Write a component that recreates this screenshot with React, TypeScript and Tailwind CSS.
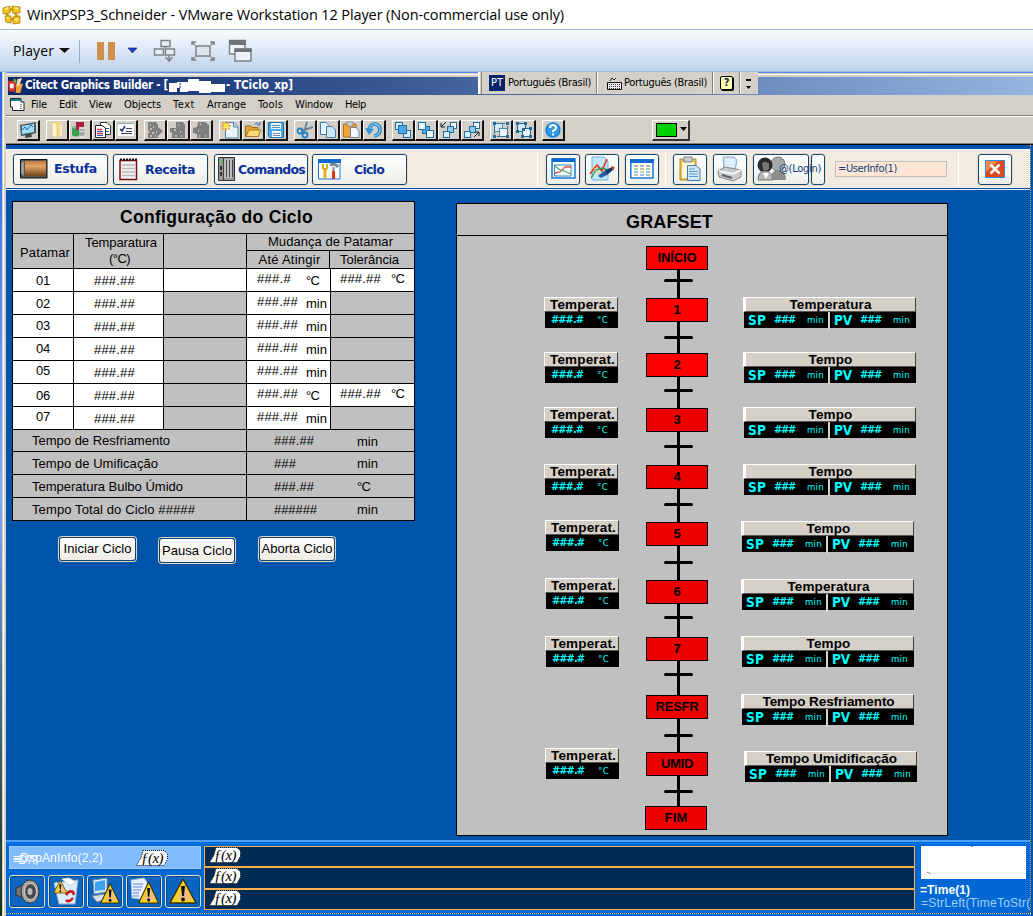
import React, { useLayoutEffect, useRef } from "react";

/** Single line of text whose tracking is adjusted to span a given width. */
function Fit({ w, className = "", children }: { w: number; className?: string; children: string }) {
  const ref = useRef<HTMLSpanElement>(null);
  useLayoutEffect(() => {
    const el = ref.current;
    if (!el) return;
    el.style.letterSpacing = "0px";
    const natural = el.getBoundingClientRect().width;
    el.style.letterSpacing = `${(w - natural) / children.length}px`;
  }, [w, children]);
  return (
    <span ref={ref} className={`inline-block shrink-0 whitespace-pre ${className}`}>
      {children}
    </span>
  );
}

const tahoma = "font-['DejaVu_Sans_Condensed','DejaVu_Sans',sans-serif]";

/* ---------- small toolbar icons (18 x 18) ---------- */
type IconName =
  | "monitor" | "folder" | "genie" | "pages" | "check" | "gray1" | "gray2" | "gray3"
  | "new" | "open" | "save" | "cut" | "copy" | "paste" | "undo"
  | "front" | "back" | "fwd" | "bwd" | "group" | "ungroup" | "help";

const sq = (x: number, y: number, f: string, s = 7, k = "#1c6ea8") => (
  <rect key={`${x}-${y}`} x={x + 0.5} y={y + 0.5} width={s} height={s} fill={f} stroke={k} />
);

const grayShapes = [
  "M2 1H10L12 4V6L17 10L12 15V17H2V12L4 11L2 9Z",
  "M7 1H14L16 4V17H3V12L1 11V7H7Z",
  "M6 1H13L17 4V17H5V13L1 12V7L5 6Z",
];

const icons: Record<IconName, React.ReactNode> = {
  monitor: (
    <>
      <path d="M1 4L17 1V12L11 14L2 15Z" fill="#53606b" />
      <path d="M3 5L15 3V11L3 13Z" fill="#9fdcf8" />
      <path d="M3 9L6 6L8 9L12 4L14 6" stroke="#1172b8" fill="none" />
      <path d="M7 13L12 12L13 16L6 17Z" fill="#404850" />
    </>
  ),
  folder: (
    <>
      <path d="M4 1H14V15H4Z" fill="#efd98a" />
      <path d="M4 1L9 3V17L4 15Z" fill="#fff6cf" stroke="#d8b95a" strokeWidth=".6" />
      <path d="M13 4V15" stroke="#fff" />
    </>
  ),
  genie: (
    <>
      <path d="M1 6H9V14Q5 17 1 14Z" fill="#37a352" />
      <ellipse cx="5" cy="6" rx="4" ry="1.6" fill="#7ad08f" />
      <path d="M5 1H13V9H5Z" fill="#b31942" />
      <path d="M8 6H15V15L12 17H9Z" fill="#dcdcdc" />
      <path d="M9 9H14M9 12H14M9 14H13" stroke="#777" />
    </>
  ),
  pages: (
    <>
      <path d="M6.500 1.500H13L16.500 5V13.500H6.500Z" fill="#fff" stroke="#333" />
      <path d="M1.500 4.500H8L11.500 7V16.500H1.500Z" fill="#fff" stroke="#223" />
      <path d="M3 8.500H8M3 12.500H9" stroke="#e02b2b" strokeWidth="1.400" />
      <path d="M3 10.500H9M3 14.500H9" stroke="#2a53c8" />
      <path d="M12 7.500H15M12 10.500H15" stroke="#2a53c8" />
    </>
  ),
  check: (
    <>
      <path d="M1 2H17V15H1Z" fill="#fff" />
      <path d="M1 2.500H17" stroke="#8aa" />
      <path d="M3 8L5 10L8 5" stroke="#1a2e80" strokeWidth="1.500" fill="none" />
      <path d="M9 7.500H15M9 10.500H15M4 12.500H15" stroke="#446" />
    </>
  ),
  gray1: <><path d={grayShapes[0]} fill="#7f7f7f" /><path d="M4 4H5M7 6H8M4 8H6M6 12H8M10 11H11M4 15H6M9 15H10" stroke="#fff" /></>,
  gray2: <><path d={grayShapes[1]} fill="#7f7f7f" /><path d="M9 4H10M5 9H7M11 11H12M6 15H8M12 15H13" stroke="#fff" /></>,
  gray3: <><path d={grayShapes[2]} fill="#7f7f7f" /><path d="M8 3H9M6 10H7M7 15H8M13 15H14" stroke="#fff" /></>,
  new: (
    <>
      <path d="M4.500 1.500H13L17 6V17H4.500Z" fill="#eaf5fd" stroke="#4d89b8" />
      <path d="M12.500 1.500V6H17" fill="#b7dbf2" stroke="#4d89b8" />
      <path d="M5 0V10M0 5H10M1.500 1.500L8.500 8.500M8.500 1.500L1.500 8.500" stroke="#f39a13" strokeWidth="1.300" />
      <circle cx="5" cy="5" r="2.500" fill="#ffe64a" />
    </>
  ),
  open: (
    <>
      <path d="M1.500 5H7L8 6.500H14V15.500H1.500Z" fill="#e3a537" stroke="#9c6c14" />
      <path d="M2 15.500L5 9H17L14 15.500Z" fill="#ffd873" stroke="#a87b22" />
      <path d="M10 4Q13 0 16 4M16 1V4H13" stroke="#5577a0" fill="none" />
    </>
  ),
  save: (
    <>
      <path d="M1.500 1.500H16.500V16.500H3L1.500 15Z" fill="#4aa9e6" stroke="#1d78b8" />
      <path d="M4 2H14V8H4Z" fill="#e4f4ff" />
      <path d="M5 10H14V16H5Z" fill="#fff" />
      <path d="M5 4.500H13M5 6.500H13M6 12.500H13M6 14.500H13" stroke="#6e8da6" />
    </>
  ),
  cut: (
    <>
      <path d="M11 1L8 11M17 6L5 10" stroke="#6d8192" strokeWidth="2" />
      <circle cx="4" cy="10" r="2.500" fill="none" stroke="#1f83cb" strokeWidth="1.800" />
      <circle cx="9" cy="14" r="2.500" fill="none" stroke="#1f83cb" strokeWidth="1.800" />
    </>
  ),
  copy: (
    <>
      <path d="M1.500 1.500H7L10 4.500V13.500H1.500Z" fill="#e9f5fd" stroke="#3f7fae" />
      <path d="M7.500 5.500H13L16.500 9V16.500H7.500Z" fill="#cfe8f8" stroke="#3f7fae" />
    </>
  ),
  paste: (
    <>
      <path d="M1.500 3H14V16H1.500Z" fill="#f0a23b" stroke="#b46e14" />
      <path d="M5 1H11V5H5Z" fill="#cfd3d6" stroke="#777" strokeWidth=".7" />
      <path d="M8.500 6.500H14L17 10V16.500H8.500Z" fill="#f2f8fd" stroke="#6f8599" />
    </>
  ),
  undo: (
    <>
      <path d="M4 9Q5 3 10 3Q15 4 15 9Q15 14 9 15" stroke="#1c78bf" strokeWidth="3.600" fill="none" />
      <path d="M4 9Q5 3 10 3Q15 4 15 9Q15 14 9 15" stroke="#6cc0f0" strokeWidth="1.800" fill="none" />
      <path d="M0 7L9 8L4 14Z" fill="#2f92d8" />
    </>
  ),
  front: <>{sq(1, 1, "#d9efff")}{sq(9, 9, "#d9efff")}{sq(4, 4, "#4aabea", 8)}</>,
  back: <>{sq(5, 5, "#4aabea", 7)}{sq(1, 1, "#eef8ff")}{sq(9, 9, "#eef8ff")}</>,
  fwd: <>{sq(10, 1, "#fff", 6)}{sq(7, 5, "#8cccf3", 6)}{sq(3, 10, "#d9efff", 6)}<path d="M6 1L1 6M1 2V6H5" stroke="#123" fill="none" /></>,
  bwd: <>{sq(10, 1, "#fff", 6)}{sq(6, 5, "#8cccf3", 6)}{sq(1, 10, "#d9efff", 6)}<path d="M11 16L16 11M12 11H16V15" stroke="#123" fill="none" /></>,
  group: (
    <>
      {sq(2, 2, "#d7e8f4", 8, "#4f87b0")}{sq(7, 7, "#e9f3fa", 8, "#4f87b0")}
      <path d="M1 1h3v3h-3zM14 1h3v3h-3zM1 14h3v3h-3zM14 14h3v3h-3z" fill="#236a9c" />
      <path d="M5 2.500H13M2.500 5V13M15.500 5V13M5 15.500H13" stroke="#236a9c" strokeDasharray="2 1" />
    </>
  ),
  ungroup: (
    <>
      {sq(2, 2, "#d7e8f4", 8, "#236a9c")}{sq(7, 7, "#e9f3fa", 8, "#236a9c")}
      <path d="M1 1h3v3h-3zM9 1h3v3h-3zM1 9h3v3h-3zM6 14h3v3h-3zM14 14h3v3h-3zM14 6h3v3h-3zM7 7h3v3h-3z" fill="#236a9c" />
    </>
  ),
  help: (
    <>
      <circle cx="9" cy="9" r="8" fill="#2f9be6" stroke="#9cc9e6" />
      <circle cx="9" cy="9" r="6.800" fill="none" stroke="#1773b8" />
      <path d="M6 7Q6 4 9 4Q12 4 12 7Q12 8.500 9 10V11M9 12.500V14.500" stroke="#fff" strokeWidth="2" fill="none" />
    </>
  ),
};

function Tool({ name }: { name: IconName }) {
  return (
    <div className="flex h-[21px] w-[23px] items-center justify-center border-t border-r-2 border-b-2 border-l border-t-white border-r-[#101010] border-b-[#101010] border-l-white bg-[#d4d0c8]">
      <svg width="18" height="18" viewBox="0 0 18 18" className="shrink-0">{icons[name]}</svg>
    </div>
  );
}

const toolGroups: IconName[][] = [
  ["monitor"],
  ["folder", "genie", "pages", "check"],
  ["gray1", "gray2", "gray3"],
  ["new", "open", "save"],
  ["cut", "copy", "paste", "undo"],
  ["front", "back", "fwd", "bwd"],
  ["group", "ungroup"],
  ["help"],
];

/* ---------- VMware frame ---------- */
function HostBars() {
  return (
    <>
      <div className="flex h-[29px] items-center bg-white pl-[2px] font-['Open_Sans','Noto_Sans',sans-serif] text-[14.500px] text-black">
        <svg width="20" height="22" viewBox="0 0 20 22" className="mr-[5px]">
          <path d="M4 9L10 5L15 12L9 16Z" fill="none" stroke="#d8a000" strokeWidth="2.500" />
          <g fill="#f8c51c" stroke="#a77d10" strokeWidth=".8">
            <path d="M1 4L8 2V9L1 10ZM10 2L18 3V9L11 9ZM3 12L9 12V19L4 18ZM11 13L18 12V19L11 20Z" />
          </g>
          <path d="M3 5L6 4M13 4L16 5M5 14L7 14M13 16L16 15" stroke="#fff3a0" strokeWidth="1.500" />
        </svg>
        <Fit w={537}>WinXPSP3_Schneider - VMware Workstation 12 Player (Non-commercial use only)</Fit>
      </div>
      <div className="flex h-[43px] items-center border-t border-b border-[#9dbfe1] bg-linear-to-b from-[#fafcfe] to-[#bfd3ec] pl-[13px] font-['Open_Sans','Noto_Sans',sans-serif] text-[14px] text-black">
        <Fit w={41}>Player</Fit>
        <svg width="200" height="28" viewBox="0 0 200 28">
          <path d="M5 11H16L10.500 16Z" fill="#111" />
          <path d="M25.500 3V26" stroke="#8ab0d8" />
          <path d="M43 5H50V23H43ZM54 5H61V23H54Z" fill="#cf8f4d" />
          <path d="M74 11H83L78.500 16Z" fill="#1b3fe0" stroke="#123" strokeWidth=".6" />
          <g fill="#e6eef7" stroke="#7d8287" strokeWidth="1.500">
            <rect x="107" y="3.500" width="9" height="6" />
            <rect x="100.500" y="12" width="9" height="6" />
            <rect x="111.500" y="12" width="9" height="6" />
            <path d="M111.500 9V12M115 18V23M111.500 20L115 24L118.500 20" fill="none" />
          </g>
          <g fill="none" stroke="#7d8287" strokeWidth="1.500">
            <rect x="142" y="9" width="14" height="10" fill="#dfe5ec" />
            <path d="M142 5H138V8M156 5H160V8M142 23H138V20M156 23H160V20M138 5L141 8M160 5L157 8M138 23L141 20M160 23L157 20" />
          </g>
          <path d="M175.500 3.500H191V17H175.500Z" fill="#eef3f9" stroke="#7d8287" strokeWidth="1.500" />
          <path d="M175 3H192V8H175Z" fill="#6f7377" />
          <path d="M181 12H197V24H181Z" fill="#eef3f9" stroke="#7d8287" strokeWidth="1.500" />
          <path d="M180.500 11.500H197.500V15H180.500Z" fill="#6f7377" />
        </svg>
      </div>
    </>
  );
}

const menus: [string, number, number][] = [
  ["File", 16, 12], ["Edit", 18, 12], ["View", 23, 12], ["Objects", 37, 12],
  ["Text", 22, 12], ["Arrange", 39, 12], ["Tools", 25, 12], ["Window", 38, 12], ["Help", 21, 0],
];

function LanguageBar() {
  return (
    <div className={`absolute top-[72px] left-[478px] flex h-[22px] w-[280px] items-center border-l-2 border-white bg-[#d4d0c8] ${tahoma} text-[11px] text-black`}>
      <div className="ml-px h-full w-[2px] border-l border-[#808080]" />
      <div className="ml-[6px] flex h-[16px] w-[16px] items-center justify-center bg-[#0a246a] text-white"><Fit w={12} className="text-[11px]">PT</Fit></div>
      <Fit w={83} className="ml-[3px]">Português (Brasil)</Fit>
      <div className="mr-[8px] ml-[5px] h-full w-[2px] border-l border-[#808080] bg-white" />
      <svg width="17" height="13" viewBox="0 0 17 13">
        <path d="M4 4L6 1L8 3L10 1M1.500 5.500H15.500V12.500H1.500Z" fill="#eee" stroke="#111" />
        <path d="M3 7.500H14M3 9.500H14M3 11.500H14" stroke="#333" strokeDasharray="1 1" />
      </svg>
      <Fit w={83} className="ml-px">Português (Brasil)</Fit>
      <div className="ml-[5px] h-full w-[2px] border-l border-[#808080] bg-white" />
      <div className="ml-[6px] flex h-[14px] w-[13px] items-center justify-center rounded-xs border border-black bg-[#ffffa8] text-[11px] font-bold text-[#0a1e6a] shadow-[1px_1px_0_#000]">?</div>
      <div className="ml-[6px] h-full w-[2px] border-l border-[#808080] bg-white" />
      <svg width="9" height="16" viewBox="0 0 9 16" className="ml-[4px]"><path d="M1 4H6V6H1ZM1 11H6L3.500 14Z" fill="#000" /></svg>
    </div>
  );
}

function BuilderBars() {
  return (
    <div className={`bg-[#d4d0c8] ${tahoma} text-[11px] text-black`}>
      <div className="h-px bg-[#5d86ee]" />
      <div className="h-px bg-[#d4d0c8]" />
      <div className="h-px bg-white" />
      <div className="h-[2px]" />
      <div className="ml-[2px] flex h-[18px] items-center bg-linear-to-r from-[#0a246a] to-[#95b5df] text-[11.500px] font-bold text-white">
        <svg width="16" height="16" viewBox="0 0 17 17" className="mr-px">
          <path d="M0 3H7L9 7L7 15L1 14Z" fill="#d83030" />
          <path d="M2 6H6V11H2Z" fill="#fff" />
          <path d="M9 6H16L13 16H8Z" fill="#f0a030" />
          <path d="M10 1L15 0L12 8L9 9Z" fill="#f7d9b0" />
          <path d="M6 0L9 2V6L6 4Z" fill="#50b050" />
        </svg>
        <Fit w={143}>{"Citect Graphics Builder - ["}</Fit>
        <svg width="58" height="17" viewBox="0 0 58 17"><path d="M1 5H9V4H20V1H31V3H43V6H57V14H43V15H31V13H20V14H12V10H9V14H1Z" fill="#fff" /><path d="M11 6H13M11 9H13" stroke="#0a246a" /></svg>
        <Fit w={67}>- TCiclo_xp]</Fit>
      </div>
      <div className="flex h-[20px] items-center pl-[4px]">
        <svg width="15" height="15" viewBox="0 0 15 15" className="mr-[6px]">
          <path d="M.5 .5H11V4H14V12.500H2.500V9H.5Z" fill="#fff" stroke="#222" />
          <path d="M1 1H11V3H1Z" fill="#1a7d8e" />
          <path d="M11 6V12M9 12.500H14" stroke="#222" strokeDasharray="1 1" />
        </svg>
        {menus.map(([label, w, gap]) => (
          <React.Fragment key={label}>
            <Fit w={w}>{label}</Fit>
            <span className="shrink-0" style={{ width: gap }} />
          </React.Fragment>
        ))}
      </div>
      <div className="h-px bg-[#808080]" />
      <div className="h-px bg-white" />
      <div className="flex h-[26px] items-center pl-[11px]">
        <div className="flex gap-[6px]">
          {toolGroups.map((g, i) => (
            <div key={i} className="flex">
              {g.map((n) => <Tool key={n} name={n} />)}
            </div>
          ))}
        </div>
        <div className="ml-[87px] flex h-[21px] w-[38px] items-center border border-r-2 border-b-2 border-white border-r-[#333] border-b-[#333] pl-[3px]">
          <div className="h-[14px] w-[21px] border border-black bg-[#00d200]" />
          <svg width="8" height="5" viewBox="0 0 8 5" className="ml-[3px]"><path d="M0 0H7L3.500 4Z" /></svg>
        </div>
      </div>
      <div className="h-px bg-[#808080]" />
      <div className="h-px bg-black" />
    </div>
  );
}

/* ---------- runtime navigation strip ---------- */
const navBox = "flex shrink-0 items-center rounded-[3px] border border-[#14466e] bg-linear-to-b from-white to-[#eeeee8] shadow-[0_0_0_1px_#e2ddd0]";

function NavStrip() {
  const label = "text-[12.500px] font-bold text-[#0b319b] font-['DejaVu_Sans',sans-serif]";
  return (
    <div className="flex h-[39px] items-center border-t border-white bg-[#f4ebe0] pl-[7px]">
      <div className={`${navBox} h-[31px] w-[95px]`}>
        <svg width="28" height="20" viewBox="0 0 28 20" className="ml-[6px] shrink-0">
          <defs><linearGradient id="roll" x1="0" y1="0" x2="0" y2="1"><stop offset="0" stopColor="#b87c45" /><stop offset=".35" stopColor="#e5a364" /><stop offset="1" stopColor="#70451c" /></linearGradient></defs>
          <path d="M.5 .5H27V19H.5Z" fill="#59544e" stroke="#111" />
          <path d="M5 2H26V17H5Z" fill="url(#roll)" />
          <path d="M1 4L4 2V17L1 14Z" fill="#9a9a94" />
        </svg>
        <Fit w={43} className={`${label} ml-[6px]`}>Estufa</Fit>
      </div>
      <div className={`${navBox} ml-[5px] h-[31px] w-[95px]`}>
        <svg width="19" height="23" viewBox="0 0 19 23" className="ml-[5px] shrink-0">
          <path d="M1 2.500H17.500V21.500H1Z" fill="#f3f3f3" stroke="#7a1010" strokeWidth="1.500" />
          <path d="M1 1.500H18" stroke="#111" strokeWidth="2" strokeDasharray="2 1" />
          <path d="M3 7H16M3 10.500H16M3 14H16M3 17.500H16" stroke="#b8b8b8" strokeWidth="1.500" />
        </svg>
        <Fit w={50} className={`${label} ml-[7px] pt-[2px]`}>Receita</Fit>
      </div>
      <div className={`${navBox} ml-[6px] h-[31px] w-[94px]`}>
        <svg width="17" height="24" viewBox="0 0 17 24" className="ml-[3px] shrink-0">
          <path d="M.5 .5H16.500V23.500H.5Z" fill="#9b9b9b" stroke="#333" />
          <path d="M5.500 1V23M8.500 3V20M11.500 3V20M14.500 3V20" stroke="#4a4a4a" strokeWidth="1.300" />
          <path d="M7 2V21M10 2V21M13 2V21" stroke="#ececec" />
          <path d="M3 3V6" stroke="#3ae03a" strokeWidth="1.500" />
          <path d="M3 9V13M3 15V19" stroke="#333" strokeWidth="2" />
        </svg>
        <Fit w={67} className={`${label} ml-[3px] pt-[2px]`}>Comandos</Fit>
      </div>
      <div className={`${navBox} ml-[4px] h-[31px] w-[95px]`}>
        <svg width="23" height="21" viewBox="0 0 23 21" className="ml-[5px] shrink-0">
          <path d="M.5 .5H22V20H.5Z" fill="#fff" stroke="#1b78d8" />
          <path d="M0 0H23V4H0Z" fill="#1469d0" />
          <path d="M7 11V19" stroke="#e8b020" strokeWidth="3" />
          <path d="M5 5V9L7 11L9 9V5" fill="none" stroke="#e0a515" strokeWidth="2" />
          <path d="M12 6Q17 4 20 8" stroke="#7b8a94" strokeWidth="3" fill="none" />
          <path d="M15.500 8V13" stroke="#7b8a94" strokeWidth="2" />
          <path d="M15.500 12V20" stroke="#e03018" strokeWidth="3" />
        </svg>
        <Fit w={30} className={`${label} ml-[13px] pt-[2px]`}>Ciclo</Fit>
      </div>
      <div className="ml-[130px] h-[33px] w-[9px] border-l border-white" />
      <div className={`${navBox} h-[31px] w-[34px] justify-center`}>
        <svg width="25" height="22" viewBox="0 0 25 22"><path d="M1 1H24V20H1Z" fill="#eef8fd" stroke="#1b78d8" strokeWidth="1.500" /><path d="M1 0H24V4H1Z" fill="#1469d0" /><path d="M3.500 7H20V18H3.500Z" fill="#fff" stroke="#3986a4" /><path d="M4 15L9 14L14 9L20 9" fill="none" stroke="#e05050" strokeWidth="1.300" /><path d="M4 8L9 12L13 13L20 16" fill="none" stroke="#46aa66" strokeWidth="1.300" /></svg>
      </div>
      <div className={`${navBox} ml-[5px] h-[31px] w-[34px] justify-center`}>
        <svg width="26" height="26" viewBox="0 0 26 26"><path d="M3 1H15L19 5V24H3Z" fill="#c3e6fa" stroke="#70b4de" /><path d="M1 18L8 9L13 15L18 3" fill="none" stroke="#e83020" strokeWidth="1.600" /><path d="M2 22L7 14L13 12L19 14" fill="none" stroke="#2b9a40" strokeWidth="1.400" /><path d="M3 10L8 15L12 20" fill="none" stroke="#e8c030" /><path d="M9 20L15 15L18 19L12 22Z" fill="#285fa8" /><path d="M15 15L23 11L25 13L18 19Z" fill="#153968" /><path d="M22 10L26 11L24 15Z" fill="#d8452e" /></svg>
      </div>
      <div className={`${navBox} ml-[6px] h-[31px] w-[34px] justify-center`}>
        <svg width="24" height="20" viewBox="0 0 24 20"><path d="M.8 .8H23V19H.8Z" fill="#fff" stroke="#1b78d8" strokeWidth="1.500" /><path d="M0 0H24V4H0Z" fill="#1469d0" /><path d="M4 7H8M10 7H14M16 7H20" stroke="#999" strokeWidth="1.500" /><path d="M4 10H8M10 13H14M16 10H20" stroke="#9cc878" strokeWidth="1.500" /><path d="M4 13H8M10 16H14M16 13H20" stroke="#6db2e8" strokeWidth="1.500" /><path d="M4 16H8M10 10H14M16 16H20" stroke="#b8a890" strokeWidth="1.500" /></svg>
      </div>
      <div className="ml-[6px] h-[33px] w-[8px] border-l border-white" />
      <div className={`${navBox} h-[31px] w-[34px] justify-center`}>
        <svg width="24" height="26" viewBox="0 0 24 26"><path d="M2 3H18V24H2Z" fill="#efc14d" stroke="#a98932" /><path d="M4 6H16V22H4Z" fill="#fff8d8" /><path d="M6 1H14V6H6Z" fill="#c5d3dc" stroke="#71838f" /><path d="M9.500 9.500H18L22 13V24.500H9.500Z" fill="#d2e9fc" stroke="#447cb0" /><path d="M11 13H17M11 15.500H20M11 18H20M11 20.500H20" stroke="#589acb" /></svg>
      </div>
      <div className={`${navBox} ml-[6px] h-[31px] w-[34px] justify-center`}>
        <svg width="26" height="26" viewBox="0 0 26 26"><path d="M6 1H17L20 4L18 14H7Z" fill="#d0e7fb" stroke="#8aabc4" /><path d="M1 15L8 11L24 14V21L16 25L2 21Z" fill="#c9ccce" stroke="#838789" /><path d="M2 15L16 18L24 14" fill="none" stroke="#fff" strokeWidth="1.500" /><path d="M5 19L15 22" stroke="#5e6264" strokeWidth="2" /><path d="M9 4H17M9 7H17M8 10H17" stroke="#fff" /></svg>
      </div>
      <div className={`${navBox} relative z-10 ml-[6px] h-[31px] w-[56px]`}>
        <svg width="30" height="26" viewBox="0 0 30 26" className="ml-[3px] shrink-0"><circle cx="21" cy="8" r="7" fill="#a8a8a8" stroke="#737373" /><path d="M13 24Q14 14 21 14Q29 14 29 24Z" fill="#8b8b8b" /><circle cx="8" cy="9" r="7.500" fill="#2b2b2b" /><path d="M5 7Q9 4 12 8V13Q8 16 6 13Z" fill="#777" /><path d="M1 24Q1 15 8 15Q15 15 16 24Z" fill="#b8b8b8" stroke="#777" /><path d="M6 17L9 23L12 17" fill="#fff" /></svg>
        <Fit w={42} className={`${tahoma} -ml-[8px] text-[11px] text-[#0d417d]`}>@(Login)</Fit>
      </div>
      <div className={`${navBox} ml-[2px] h-[31px] w-[14px]`} />
      <div className={`${tahoma} ml-[10px] flex h-[16px] w-[112px] items-center border border-[#bdbdbd] bg-[#ffe6d4] pl-[2px] text-[11px] text-[#0d417d]`}>
        <Fit w={59}>=UserInfo(1)</Fit>
      </div>
      <div className="ml-[11px] h-[33px] w-[20px] border-l border-white" />
      <div className={`${navBox} h-[31px] w-[34px] justify-center`}>
        <svg width="20" height="18" viewBox="0 0 20 18"><path d="M.5 .5H19.500V17.500H.5Z" fill="#dc4b21" stroke="#3689d0" /><path d="M1 1H13L1 12Z" fill="#ee8c54" /><path d="M5.500 4.500L14.500 13.500M14.500 4.500L5.500 13.500" stroke="#fff" strokeWidth="2.600" /></svg>
      </div>
    </div>
  );
}

/* ---------- configuration table ---------- */
const cell = "flex shrink-0 items-center border-r border-b border-black";
const H5 = "###.##";
type Step = { n: string; until: string; unit: string; tol?: boolean; pad: string };
const steps: Step[] = [
  { n: "01", until: "###.#", unit: "°C", tol: true, pad: "pt-px" },
  { n: "02", until: H5, unit: "min", pad: "pt-px" },
  { n: "03", until: H5, unit: "min", pad: "pb-px" },
  { n: "04", until: H5, unit: "min", pad: "pb-px" },
  { n: "05", until: H5, unit: "min", pad: "pb-[2px]" },
  { n: "06", until: H5, unit: "°C", tol: true, pad: "pt-px" },
  { n: "07", until: H5, unit: "min", pad: "pb-[3px]" },
];
const totals: [string, number, string, number, string, string][] = [
  ["Tempo de Resfriamento", 138, H5, 40, "min", "h-[22px]"],
  ["Tempo de Umificação", 126, "###", 22, "min", "h-[23px]"],
  ["Temperatura Bulbo Úmido", 151, H5, 40, "°C", "h-[23px]"],
  ["Tempo Total do Ciclo #####", 163, "######", 43, "min", "h-[23px]"],
];

function Unit({ u }: { u: string }) {
  return u === "min" ? <Fit w={21}>min</Fit> : <Fit w={13}>°C</Fit>;
}

function ConfigTable() {
  return (
    <div className="w-[403px] border-t border-l border-black bg-[#c0c0c0] text-[13px]">
      <div className={`${cell} h-[32px] w-[402px] justify-center pl-[6px]`}>
        <Fit w={193} className="text-[17.500px] font-bold">Configuração do Ciclo</Fit>
      </div>
      <div className="flex h-[35px]">
        <div className={`${cell} w-[61px] pt-[3px] pl-[7px]`}><Fit w={50}>Patamar</Fit></div>
        <div className={`${cell} w-[90px] flex-col justify-center leading-[16px]`}>
          <Fit w={72} className="ml-[5px]">Temparatura</Fit>
          <Fit w={21} className="ml-[2px]">(°C)</Fit>
        </div>
        <div className={`${cell} w-[83px]`} />
        <div className="flex w-[168px] flex-col">
          <div className={`${cell} h-[17px] w-[168px] justify-center`}><Fit w={125}>Mudança de Patamar</Fit></div>
          <div className="flex h-[18px]">
            <div className={`${cell} w-[83px] justify-center pt-px pl-[3px]`}><Fit w={62}>Até Atingir</Fit></div>
            <div className={`${cell} w-[85px] pt-px pl-[10px]`}><Fit w={59}>Tolerância</Fit></div>
          </div>
        </div>
      </div>
      {steps.map((s, i) => (
        <div key={s.n} className="flex h-[23px]">
          <div className={`${cell} ${s.pad} w-[61px] bg-white pl-[23px]`}><Fit w={14}>{s.n}</Fit></div>
          <div className={`${cell} w-[90px] bg-white pt-px pl-[20px]`}><Fit w={41}>{H5}</Fit></div>
          <div className={`${cell} w-[83px] ${i === 0 ? "bg-white" : ""}`} />
          <div className={`${cell} w-[84px] bg-white pl-[10px]`}>
            <span className="flex w-[49px] pb-[2px]"><Fit w={s.until === H5 ? 41 : 34}>{s.until}</Fit></span>
            <span className="pt-[2px]"><Unit u={s.unit} /></span>
          </div>
          <div className={`${cell} w-[84px] ${s.tol ? "bg-white" : ""} pb-[2px] pl-[9px]`}>
            {s.tol && <><Fit w={41}>{H5}</Fit><span className="ml-[10px]"><Fit w={13}>°C</Fit></span></>}
          </div>
        </div>
      ))}
      {totals.map(([name, nw, val, vw, unit, h]) => (
        <div key={name} className={`flex ${h}`}>
          <div className={`${cell} w-[234px] pt-px pl-[19px]`}><Fit w={nw}>{name}</Fit></div>
          <div className={`${cell} w-[168px] pt-px pl-[27px]`}>
            <span className="flex w-[83px]"><Fit w={vw}>{val}</Fit></span>
            <span className="pt-px"><Unit u={unit} /></span>
          </div>
        </div>
      ))}
    </div>
  );
}

/* ---------- sequence diagram ---------- */
type Node = { label: string; y: number; w: number; x?: number; dark?: boolean };
const nodes: Node[] = [
  { label: "INÍCIO", y: 246, w: 39 },
  { label: "1", y: 298, w: 7 },
  { label: "2", y: 353, w: 7 },
  { label: "3", y: 408, w: 7, dark: true },
  { label: "4", y: 465, w: 7, dark: true },
  { label: "5", y: 522, w: 7, dark: true },
  { label: "6", y: 580, w: 7, dark: true },
  { label: "7", y: 637, w: 7, dark: true },
  { label: "RESFR", y: 695, w: 43, dark: true },
  { label: "UMID", y: 752, w: 32, dark: true },
  { label: "FIM", y: 806, w: 23, x: 645, dark: true },
];
const ticks = [279, 336, 389, 445, 503, 561, 616, 673, 734, 790];
const temps: [number, number][] = [[544, 297], [544, 352], [544, 407], [544, 464], [545, 520], [545, 578], [545, 636], [545, 748]];
const timers: [string, number, number, number][] = [
  ["Temperatura", 82, 743, 297], ["Tempo", 44, 743, 352], ["Tempo", 44, 743, 407], ["Tempo", 44, 743, 464],
  ["Tempo", 44, 741, 521], ["Temperatura", 82, 741, 579], ["Tempo", 44, 741, 636],
  ["Tempo Resfriamento", 132, 741, 694], ["Tempo Umidificação", 131, 744, 751],
];
const at = (x: number, y: number) => ({ left: x - 457, top: y - 204 });
const head = "flex h-[15px] items-center border-t border-r border-b border-t-white border-r-[#404040] border-b-[#555] bg-[#d4d0c8] text-[13.500px] leading-[14px] font-bold text-black";

function Grafset() {
  return (
    <div className="relative h-[633px] w-[492px] shrink-0 border border-black bg-[#c0c0c0]">
      <div className="flex h-[32px] items-center border-b border-black pt-[5px] pl-[169px]">
        <Fit w={87} className="text-[18px] font-bold">GRAFSET</Fit>
      </div>
      <div className="absolute w-[3px] bg-black" style={{ ...at(677, 260), height: 550 }} />
      {ticks.map((y) => <div key={y} className="absolute h-[3px] w-[29px] rounded-full bg-black" style={at(664, y)} />)}
      {nodes.map((n) => (
        <div key={n.label} style={at(n.x ?? 646, n.y)} className={`absolute flex h-[24px] w-[62px] items-center justify-center border border-black text-[13px] font-bold ${n.dark ? "bg-[#ec0000]" : "bg-[#ff0000]"}`}>
          <Fit w={n.w}>{n.label}</Fit>
        </div>
      ))}
      {temps.map(([x, y]) => (
        <div key={y} className="absolute w-[74px]" style={at(x, y)}>
          <div className={`${head} border-l border-l-white pl-[5px]`}><Fit w={65}>Temperat.</Fit></div>
          <div className={`ml-px flex h-[16px] items-center bg-black pl-[6px] text-[#00ffff] ${tahoma}`}>
            <Fit w={32} className="text-[11px] font-bold">###.#</Fit>
            <Fit w={11} className="ml-[14px] text-[9.500px]">°C</Fit>
          </div>
        </div>
      ))}
      {timers.map(([name, w, x, y]) => (
        <div key={y} className="absolute w-[173px]" style={at(x, y)}>
          <div className={`${head} justify-center border-l-3 border-l-white`}><Fit w={w}>{name}</Fit></div>
          <div className={`ml-px flex h-[16px] items-center bg-black text-[#00ffff] ${tahoma}`}>
            {["SP", "PV"].map((k, i) => (
              <React.Fragment key={k}>
                {i === 1 && <div className="h-[18px] w-[2px] self-start bg-[#d4d0c8]" />}
                <div className="flex h-[16px] w-[84px] items-center pl-[4px]">
                  <Fit w={18} className="text-[13.500px] font-bold">{k}</Fit>
                  <Fit w={21} className="ml-[8px] text-[11px] font-bold">###</Fit>
                  <Fit w={17} className="ml-[12px] pt-px text-[9.500px]">min</Fit>
                </div>
              </React.Fragment>
            ))}
          </div>
        </div>
      ))}
    </div>
  );
}

/* ---------- alarm footer ---------- */
function Fx() {
  return (
    <div className="relative flex h-[16px] w-[32px] shrink-0 items-center justify-center">
      <svg width="32" height="16" viewBox="0 0 32 16" className="absolute inset-0"><path d="M7 .5H28L31.500 4V9L28 15.500H.5L5 8Z" fill="#fff" stroke="#111" strokeDasharray="1 1" /></svg>
      <span className="relative font-['Liberation_Serif',serif] text-[15px] leading-[14px] text-black italic"><Fit w={22}>ƒ(x)</Fit></span>
    </div>
  );
}

const triangle = (t: string, key = "t") => (
  <g key={key} transform={t}>
    <path d="M14 1L27 25H1Z" fill="#f5d21e" stroke="#39310a" strokeWidth="1.400" strokeLinejoin="round" />
    <path d="M15 6L23 22H8Z" fill="#f4bd7e" />
    <path d="M12 8H16L15 18H13Z" fill="#111" />
    <circle cx="14" cy="21.500" r="1.900" fill="#111" />
  </g>
);

const alarmIcons: React.ReactNode[] = [
  <>
    <path d="M4 11L9 9L18 3V26L9 20L4 18Z" fill="#727272" stroke="#333" />
    <ellipse cx="18" cy="14.500" rx="9" ry="11.500" fill="#a6a6a6" stroke="#333" />
    <ellipse cx="18.500" cy="14.500" rx="6" ry="8" fill="#4a4a4a" stroke="#ddd" />
    <ellipse cx="18" cy="14.500" rx="2.500" ry="3.500" fill="#bbb" />
  </>,
  <>
    <path d="M3 6L27 3L24 27H8Z" fill="#dceefa" stroke="#8fb0c4" />
    <path d="M11 2L18 1L25 5L19 9Z" fill="#fff" stroke="#ccd" />
    {triangle("translate(2 3) scale(.52)")}
    <path d="M15 18Q18 13 22 15L23 18M22 21Q18 26 15 23" fill="none" stroke="#c51c20" strokeWidth="2.600" />
  </>,
  <>
    <path d="M3 3L17 1V15L4 17Z" fill="#dceaf5" stroke="#6e8ca5" />
    <path d="M5 5L15 3V13L5 14Z" fill="#3ca2ee" />
    <path d="M2 19L14 17L18 22L7 25Z" fill="#d5dee7" stroke="#73889a" />
    {triangle("translate(10 6) scale(.72 .8)")}
  </>,
  <>
    <path d="M2 3L15 1L18 5V23L3 21Z" fill="#eaf3ff" stroke="#a2b9d4" />
    <path d="M4 7H14M4 10H13M4 13H12M4 16H10M4 19H10" stroke="#5b82d8" />
    {triangle("translate(9 4) scale(.76 .88)")}
  </>,
  triangle("translate(1 1)"),
];

function Footer() {
  return (
    <div className="border-t-2 border-[#50a0f4] bg-[#0068d4] pt-px">
      <div className="h-[3px] border-t border-[#0080ff]" />
      <div className="flex h-[71px]">
        <div className="ml-[3px] w-[192px]">
          <div className="flex h-[23px] items-center border border-[#a5ccf8] bg-[#80baff] pl-[3px] text-[12px] text-white">
            <span className="relative flex w-[123px]">
              <Fit w={90}>=DspAnInfo(2,2)</Fit>
              <span className="absolute top-[2px] left-0"><Fit w={23}>=D??</Fit></span>
            </span>
            <Fx />
          </div>
          <div className="mt-[6px] flex gap-[3px]">
            {alarmIcons.map((ic, i) => (
              <div key={i} className="flex h-[33px] w-[36px] items-center justify-center rounded-[3px] border border-[#e7ddc8] bg-[#0a65c0] shadow-[inset_0_0_0_1px_#084c8c]">
                <svg width="30" height="29" viewBox="0 0 30 29">{ic}</svg>
              </div>
            ))}
          </div>
        </div>
        <div className="ml-[3px] flex h-[64px] w-[712px] flex-col gap-[2px] border border-[#ffad4d] bg-[#ffad4d]">
          {[0, 1, 2].map((i) => (
            <div key={i} className="flex flex-1 bg-[#002b54] pl-[4px]"><Fx /></div>
          ))}
        </div>
        <div className="ml-[5px] flex-1">
          <div className="ml-px h-[33px] w-[105px] bg-white">
            <svg width="105" height="33" viewBox="0 0 105 33"><path d="M6 26L10 28M50 .5H52" stroke="#8c9094" /></svg>
          </div>
          <div className="mt-[4px] flex h-[14px] items-center text-[12px] font-bold text-white"><Fit w={50}>=Time(1)</Fit></div>
          <div className="flex h-[13px] w-[110px] items-center overflow-hidden pl-px text-[12px] leading-[13px] text-[#a5d0ff]"><Fit w={117}>=StrLeft(TimeToStr(T</Fit></div>
        </div>
      </div>
    </div>
  );
}

function Action({ w, children, className }: { w: number; children: string; className: string }) {
  return (
    <button className={`flex items-center justify-center rounded-[3px] border border-[#12426c] bg-linear-to-b from-white to-[#eeece4] text-[13px] text-black shadow-[0_0_0_1px_#dcd6c2] ${className}`}>
      <Fit w={w}>{children}</Fit>
    </button>
  );
}

export default function App() {
  return (
    <div className="relative h-[916px] w-[1033px] overflow-hidden bg-white font-['Liberation_Sans',Arial,sans-serif] text-black">
      <HostBars />
      <div className="flex h-[844px]">
        <div className="w-[2px] bg-linear-to-b from-[#2864e8] via-[#7da9ff] to-[#16330e]" />
        <div className="w-px bg-[#d4d0c8]" />
        <div className="w-px bg-white" />
        <div className="w-[2px] bg-[#d4d0c8]" />
        <div className="min-w-0 flex-1">
          <BuilderBars />
          <div className="flex bg-[#0054aa]">
            <div className="w-[1024px] shrink-0">
              <div className="h-[4px]" />
              <NavStrip />
              <div className="h-[2px] border-b border-[#e2eaf5]" />
              <div className="flex h-[650px]">
                <div className="w-[450px] pt-[11px] pl-[6px]">
                  <ConfigTable />
                  <div className="flex pt-[16px] pl-[47px]">
                    <Action w={68} className="h-[24px] w-[77px]">Iniciar Ciclo</Action>
                    <Action w={70} className="mt-px ml-[23px] h-[25px] w-[76px]">Pausa Ciclo</Action>
                    <Action w={71} className="ml-[24px] h-[24px] w-[76px]">Aborta Ciclo</Action>
                  </div>
                </div>
                <div className="pt-[13px]"><Grafset /></div>
              </div>
              <Footer />
            </div>
            <div className="w-[3px] border-r border-l border-r-[#0054aa] border-l-[#c99d61] border-dotted" />
          </div>
        </div>
      </div>
      <div className="absolute top-[913px] left-[6px] w-[1025px] border-t border-dotted border-[#ffad4d]" />
      <LanguageBar />
    </div>
  );
}
